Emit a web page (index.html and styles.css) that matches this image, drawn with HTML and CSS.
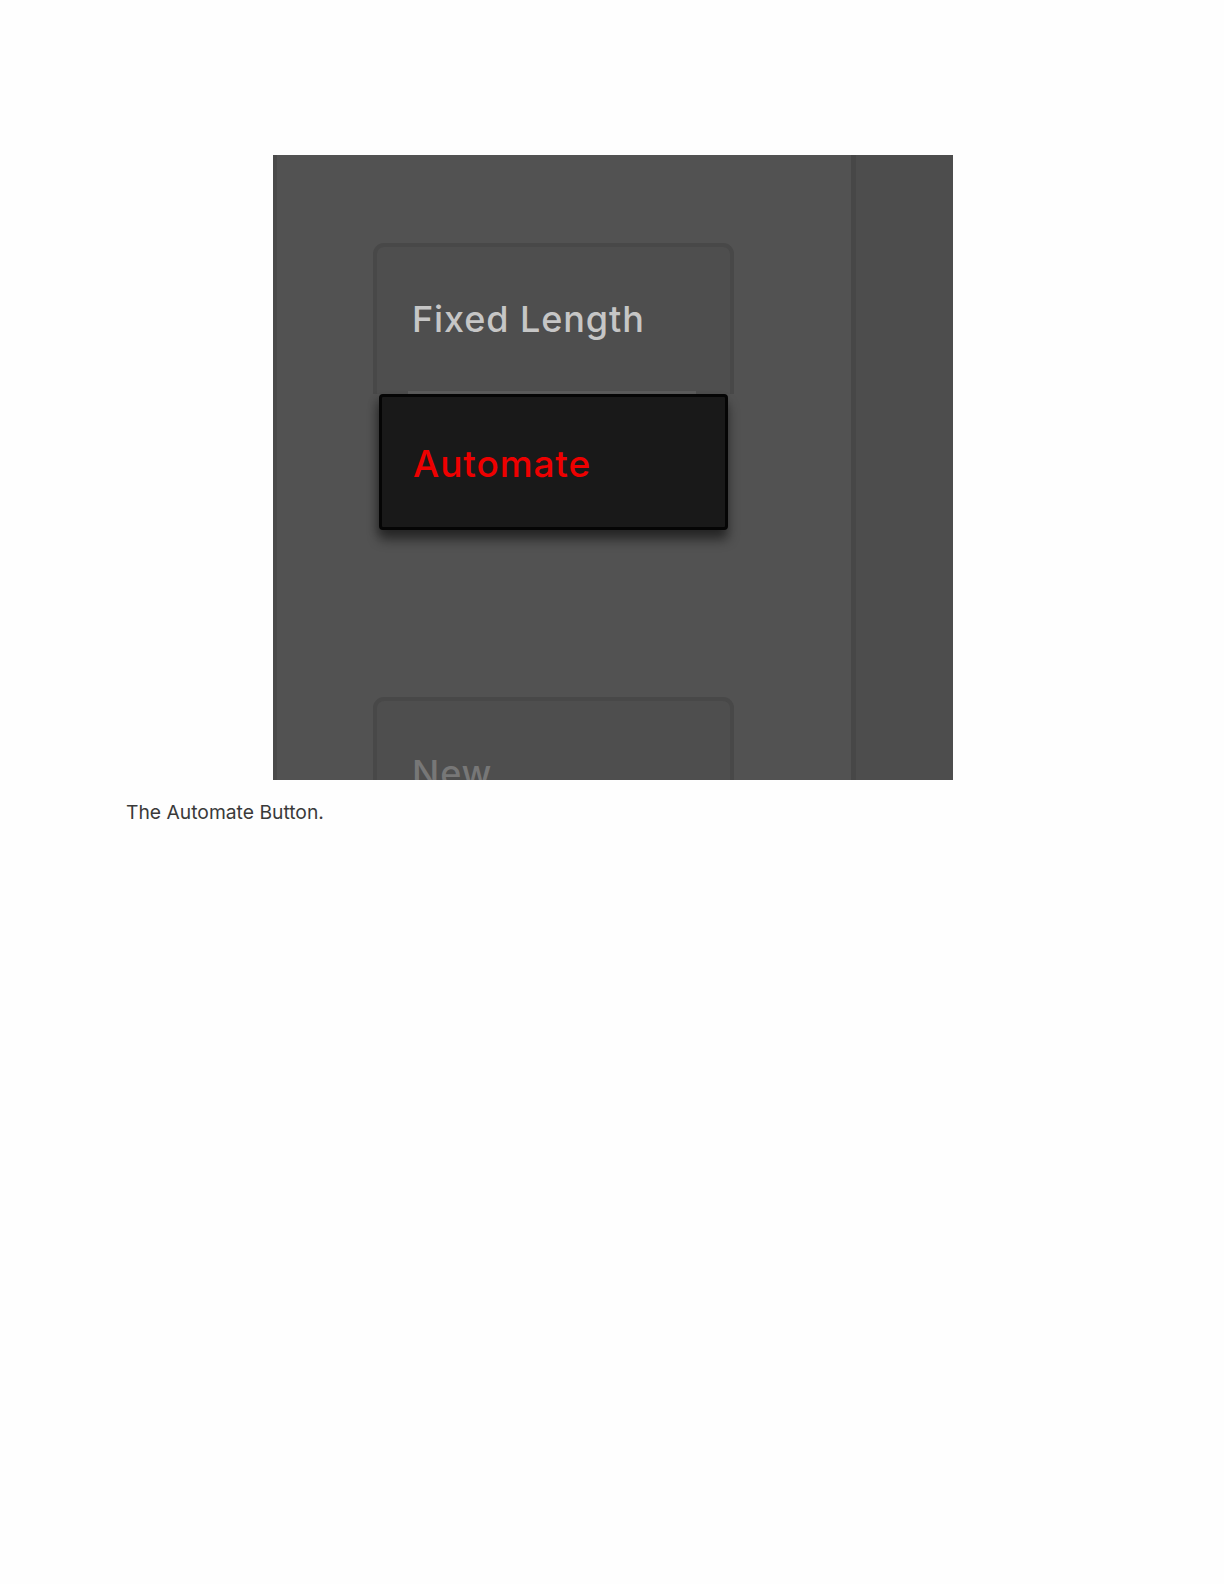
FILE: index.html
```html
<!DOCTYPE html>
<html lang="en">
<head>
<meta charset="utf-8">
<title>The Automate Button</title>
<link rel="stylesheet" href="styles.css">
</head>
<body>
<figure class="figure">
  <div class="shot">
    <div class="edge"></div>
    <div class="panel">
      <div class="btn btn-fixed">
        <span class="label">Fixed Length</span>
        <div class="highlight"></div>
      </div>
      <div class="btn-automate">
        <span class="label label-red">Automate</span>
      </div>
      <div class="btn btn-new">
        <span class="label label-dim">New</span>
      </div>
    </div>
    <div class="divider"></div>
    <div class="side"></div>
  </div>
  <figcaption class="caption">The Automate Button.</figcaption>
</figure>
</body>
</html>
```

FILE: styles.css
```css
html, body {
  margin: 0;
  padding: 0;
  background: #fefefe;
}

.figure {
  margin: 0;
  padding: 155px 0 0 126px;
}

.shot {
  width: 680px;
  height: 625px;
  margin-left: 147px;
  display: flex;
  overflow: hidden;
  background: #525252;
}

.edge {
  width: 4px;
  background: #4a4a4a;
  flex: none;
}

.panel {
  flex: 1;
  padding: 88px 0 0 96px;
  display: flex;
  flex-direction: column;
  align-items: flex-start;
}

.panel > * {
  flex: none;
}

.divider {
  width: 5px;
  flex: none;
  background: #474747;
}

.side {
  width: 97px;
  flex: none;
  background: #4d4d4d;
}

.btn {
  box-sizing: border-box;
  width: 361px;
  background: #4e4e4e;
  border: 4px solid #484848;
  border-radius: 11px;
  position: relative;
}

.btn-fixed {
  height: 151px;
  border-bottom: none;
  border-radius: 11px 11px 0 0;
  padding: 54px 0 0 35px;
}

.highlight {
  position: absolute;
  left: 31px;
  right: 34px;
  bottom: 0;
  height: 3px;
  background: #5d5d5d;
}

.btn-automate {
  box-sizing: border-box;
  width: 349px;
  height: 136px;
  margin-left: 6px;
  background: #191919;
  border: 3px solid #050505;
  border-radius: 4px;
  padding: 48px 0 0 31px;
  box-shadow: 0 10px 12px rgba(0, 0, 0, 0.45), -3px 4px 8px rgba(0, 0, 0, 0.2);
  position: relative;
  z-index: 1;
}

.btn-new {
  height: 120px;
  margin-top: 167px;
  padding: 54px 0 0 35px;
}

.label {
  display: block;
  font-family: Inter, "Noto Sans", sans-serif;
  font-size: 36px;
  font-weight: 500;
  line-height: 1;
  color: #c6c6c6;
  letter-spacing: 0.9px;
  white-space: nowrap;
}

.label-red {
  color: #ee0000;
  font-size: 37px;
}

.label-dim {
  color: #777777;
}

.caption {
  margin: 18px 0 0 0;
  font-family: Inter, "Noto Sans", sans-serif;
  font-size: 19.3px;
  line-height: 28px;
  color: #3a3a3a;
}
```
